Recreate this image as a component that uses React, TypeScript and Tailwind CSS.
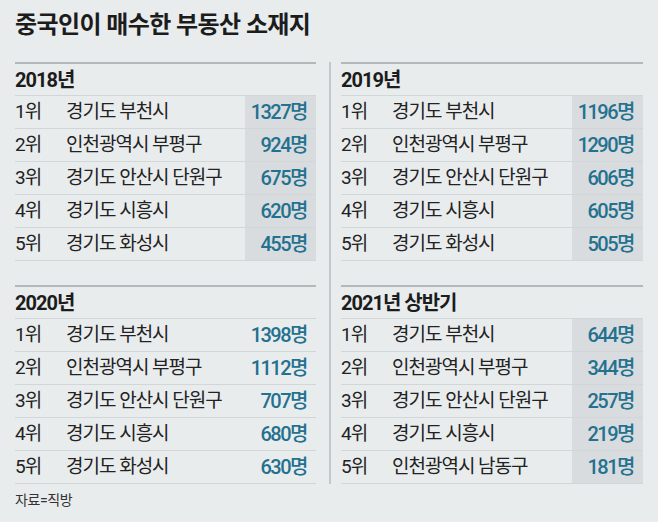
const FONT = "font-['Roboto','Noto_Sans_CJK_KR',sans-serif]";

type Row = { place: string; count: string };

const sections: { title: string; shaded: boolean; rows: Row[] }[][] = [
    [
        {
            title: "2018년",
            shaded: true,
            rows: [
                { place: "경기도 부천시", count: "1327명" },
                { place: "인천광역시 부평구", count: "924명" },
                { place: "경기도 안산시 단원구", count: "675명" },
                { place: "경기도 시흥시", count: "620명" },
                { place: "경기도 화성시", count: "455명" },
            ],
        },
        {
            title: "2020년",
            shaded: false,
            rows: [
                { place: "경기도 부천시", count: "1398명" },
                { place: "인천광역시 부평구", count: "1112명" },
                { place: "경기도 안산시 단원구", count: "707명" },
                { place: "경기도 시흥시", count: "680명" },
                { place: "경기도 화성시", count: "630명" },
            ],
        },
    ],
    [
        {
            title: "2019년",
            shaded: true,
            rows: [
                { place: "경기도 부천시", count: "1196명" },
                { place: "인천광역시 부평구", count: "1290명" },
                { place: "경기도 안산시 단원구", count: "606명" },
                { place: "경기도 시흥시", count: "605명" },
                { place: "경기도 화성시", count: "505명" },
            ],
        },
        {
            title: "2021년 상반기",
            shaded: true,
            rows: [
                { place: "경기도 부천시", count: "644명" },
                { place: "인천광역시 부평구", count: "344명" },
                { place: "경기도 안산시 단원구", count: "257명" },
                { place: "경기도 시흥시", count: "219명" },
                { place: "인천광역시 남동구", count: "181명" },
            ],
        },
    ],
];

const Section: React.FC<{
    title: string;
    shaded: boolean;
    rows: Row[];
    first: boolean;
}> = ({ title, shaded, rows, first }) => {
    return (
        <div
            className={`border-t-2 border-[#b4b8bb] ${first ? "" : "mt-[24px]"}`}
        >
            <div className="flex h-[32px] items-center border-b border-[#d2d6d9] text-[20px] font-bold tracking-[-1px] text-[#1c1c1c]">
                {title}
            </div>
            {rows.map((row, i) => (
                <div
                    key={i}
                    className="flex h-[33px] items-center border-b border-[#d2d6d9] text-[19px] tracking-[-1px] text-[#222]"
                >
                    <div className="w-[51px] shrink-0">{i + 1}위</div>
                    <div className="flex-1">{row.place}</div>
                    <div
                        className={`flex h-full w-[71px] items-center justify-end pr-[9px] text-[20px] font-medium tracking-[-1.5px] text-[#24718f] ${shaded ? "bg-[#d8dcdf]" : ""}`}
                    >
                        {row.count}
                    </div>
                </div>
            ))}
        </div>
    );
};

export default function App() {
    return (
        <div
            className={`${FONT} h-[522px] w-[658px] bg-[#e9eced] px-[15px] text-[#222]`}
        >
            <div className="h-[62px] pt-[10px] text-[24px] leading-[30px] font-bold tracking-[-0.6px] text-[#1c1c1c]">
                중국인이 매수한 부동산 소재지
            </div>
            <div className="flex">
                <div className="w-[301px]">
                    {sections[0].map((s, i) => (
                        <Section key={s.title} {...s} first={i === 0} />
                    ))}
                </div>
                <div className="ml-[13px] w-[2px] self-stretch bg-[#c4c8cb]" />
                <div className="ml-[10px] w-[302px]">
                    {sections[1].map((s, i) => (
                        <Section key={s.title} {...s} first={i === 0} />
                    ))}
                </div>
            </div>
            <div className="mt-[6px] text-[14px] leading-[20px] tracking-[-0.4px] text-[#333]">
                자료=직방
            </div>
        </div>
    );
}
